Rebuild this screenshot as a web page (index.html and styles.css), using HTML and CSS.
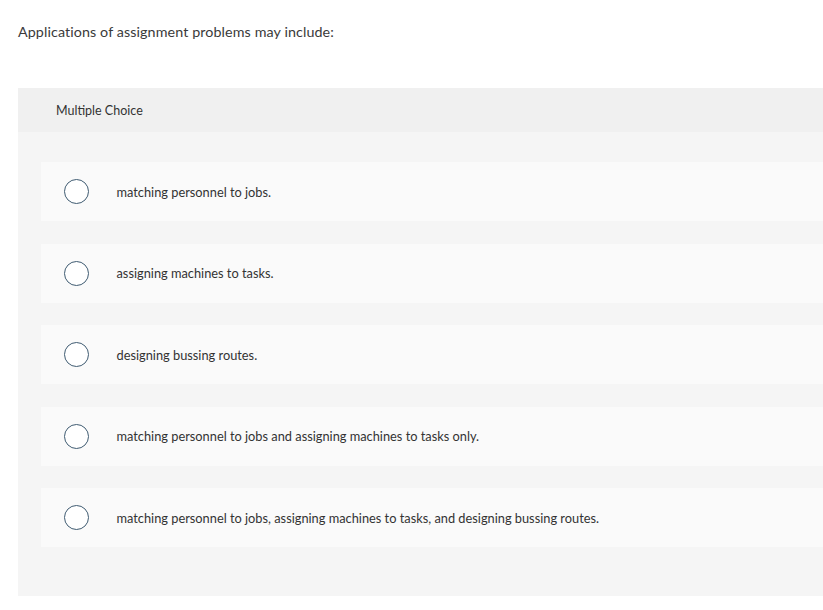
FILE: index.html
```html
<!DOCTYPE html>
<html>
<head>
<meta charset="utf-8">
<link rel="stylesheet" href="styles.css">
</head>
<body>
<div class="page">
  <p class="question">Applications of assignment problems may include:</p>
  <div class="panel">
    <div class="panel-header">Multiple Choice</div>
    <div class="panel-body">
      <label class="option"><span class="radio"></span><span class="option-text">matching personnel to jobs.</span></label>
      <label class="option"><span class="radio"></span><span class="option-text">assigning machines to tasks.</span></label>
      <label class="option"><span class="radio"></span><span class="option-text">designing bussing routes.</span></label>
      <label class="option"><span class="radio"></span><span class="option-text">matching personnel to jobs and assigning machines to tasks only.</span></label>
      <label class="option"><span class="radio"></span><span class="option-text">matching personnel to jobs, assigning machines to tasks, and designing bussing routes.</span></label>
    </div>
  </div>
</div>
</body>
</html>
```

FILE: styles.css
```css
html, body {
  margin: 0;
  padding: 0;
  background: #ffffff;
  overflow: hidden;
}
.page {
  font-family: Lato, "Liberation Sans", sans-serif;
  color: #333333;
  padding-left: 18px;
}
.question {
  margin: 0;
  padding-top: 22px;
  font-size: 14.3px;
  line-height: 20px;
  color: #3a3a3a;
  letter-spacing: 0.1px;
}
.panel {
  margin-top: 46px;
}
.panel-header {
  height: 44px;
  display: flex;
  align-items: center;
  padding-left: 38px;
  background: #f0f0f0;
  font-size: 12.5px;
  color: #333333;
}
.panel-body {
  background: #f5f5f5;
  padding: 30px 0 49px 23px;
  display: flex;
  flex-direction: column;
  gap: 22.5px;
}
.option {
  height: 59px;
  background: #fafafa;
  display: flex;
  align-items: center;
  padding-left: 22.5px;
}
.radio {
  box-sizing: border-box;
  width: 25px;
  height: 25px;
  border: 1.5px solid #3f5b71;
  border-radius: 50%;
  background: #ffffff;
  flex: none;
}
.option-text {
  margin-left: 28px;
  font-size: 12.8px;
  color: #333333;
}
```
